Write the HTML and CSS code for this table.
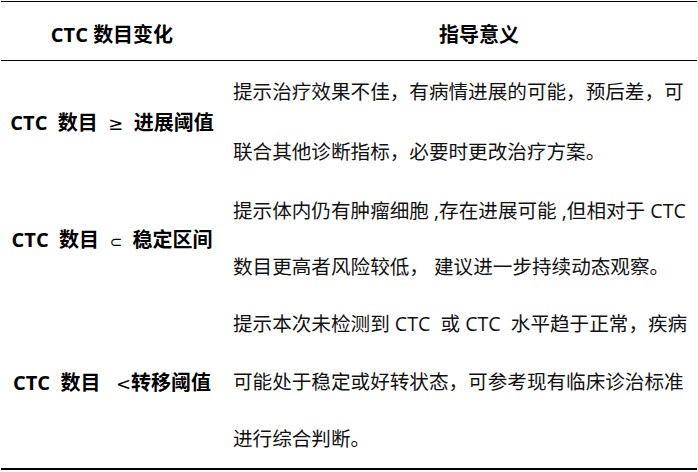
FILE: index.html
```html
<!DOCTYPE html>
<html lang="zh">
<head>
<meta charset="utf-8">
<link rel="stylesheet" href="styles.css">
</head>
<body>
<table class="ctc">
  <thead>
    <tr>
      <th class="col-a">CTC 数目变化</th>
      <th class="col-b">指导意义</th>
    </tr>
  </thead>
  <tbody>
    <tr class="r1">
      <td class="col-a">CTC&nbsp; 数目 &nbsp;<span class="sym">≥</span>&nbsp; 进展阈值</td>
      <td class="col-b">提示治疗效果不佳，有病情进展的可能，预后差，可<br>联合其他诊断指标，必要时更改治疗方案。</td>
    </tr>
    <tr class="r2">
      <td class="col-a">CTC&nbsp; 数目 &nbsp;<span class="sym sub">⊂</span>&nbsp; 稳定区间</td>
      <td class="col-b">提示体内仍有肿瘤细胞 ,存在进展可能 ,但相对于 CTC<br>数目更高者风险较低， 建议进一步持续动态观察。</td>
    </tr>
    <tr class="r3">
      <td class="col-a">CTC&nbsp; 数目 &nbsp; <span class="sym">&lt;</span>转移阈值</td>
      <td class="col-b">提示本次未检测到 CTC&nbsp; 或 CTC&nbsp; 水平趋于正常，疾病<br>可能处于稳定或好转状态，可参考现有临床诊治标准<br>进行综合判断。</td>
    </tr>
  </tbody>
</table>
</body>
</html>
```

FILE: styles.css
```css
html, body {
  margin: 0;
  padding: 0;
  background: #fff;
}
body {
  padding: 1px 0 0 1px;
  font-family: "Open Sans", "Noto Sans CJK SC", "Noto Sans", sans-serif;
  color: #111;
}
.ctc {
  width: 696px;
  border-collapse: collapse;
  table-layout: fixed;
  border-top: 1px solid #000;
  border-bottom: 2px solid #000;
}
.ctc th {
  height: 59px;
  padding: 0;
  font-size: 20px;
  font-weight: bold;
  color: #000;
  border-bottom: 1px solid #000;
  vertical-align: middle;
  padding-top: 4px;
  box-sizing: border-box;
}
.ctc th.col-a {
  width: 222px;
  text-align: center;
}
.ctc th.col-b {
  text-align: center;
  padding-left: 38px;
}
.ctc td {
  padding: 0;
  vertical-align: middle;
  font-size: 19.6px;
}
.ctc td.col-a {
  text-align: center;
  font-weight: bold;
  color: #000;
  white-space: nowrap;
  font-size: 20px;
}
.ctc td.col-b {
  padding-left: 10px;
  white-space: nowrap;
}
.r1 td.col-b {
  line-height: 60px;
  padding-top: 1px;
}
.r2 td.col-b {
  line-height: 56px;
  padding-top: 1px;
}
.r3 td.col-b {
  line-height: 57.5px;
}
.sym {
  font-family: "DejaVu Sans", sans-serif;
  font-weight: normal;
  font-size: 18px;
}
.sym.sub {
  font-size: 15px;
}
```
